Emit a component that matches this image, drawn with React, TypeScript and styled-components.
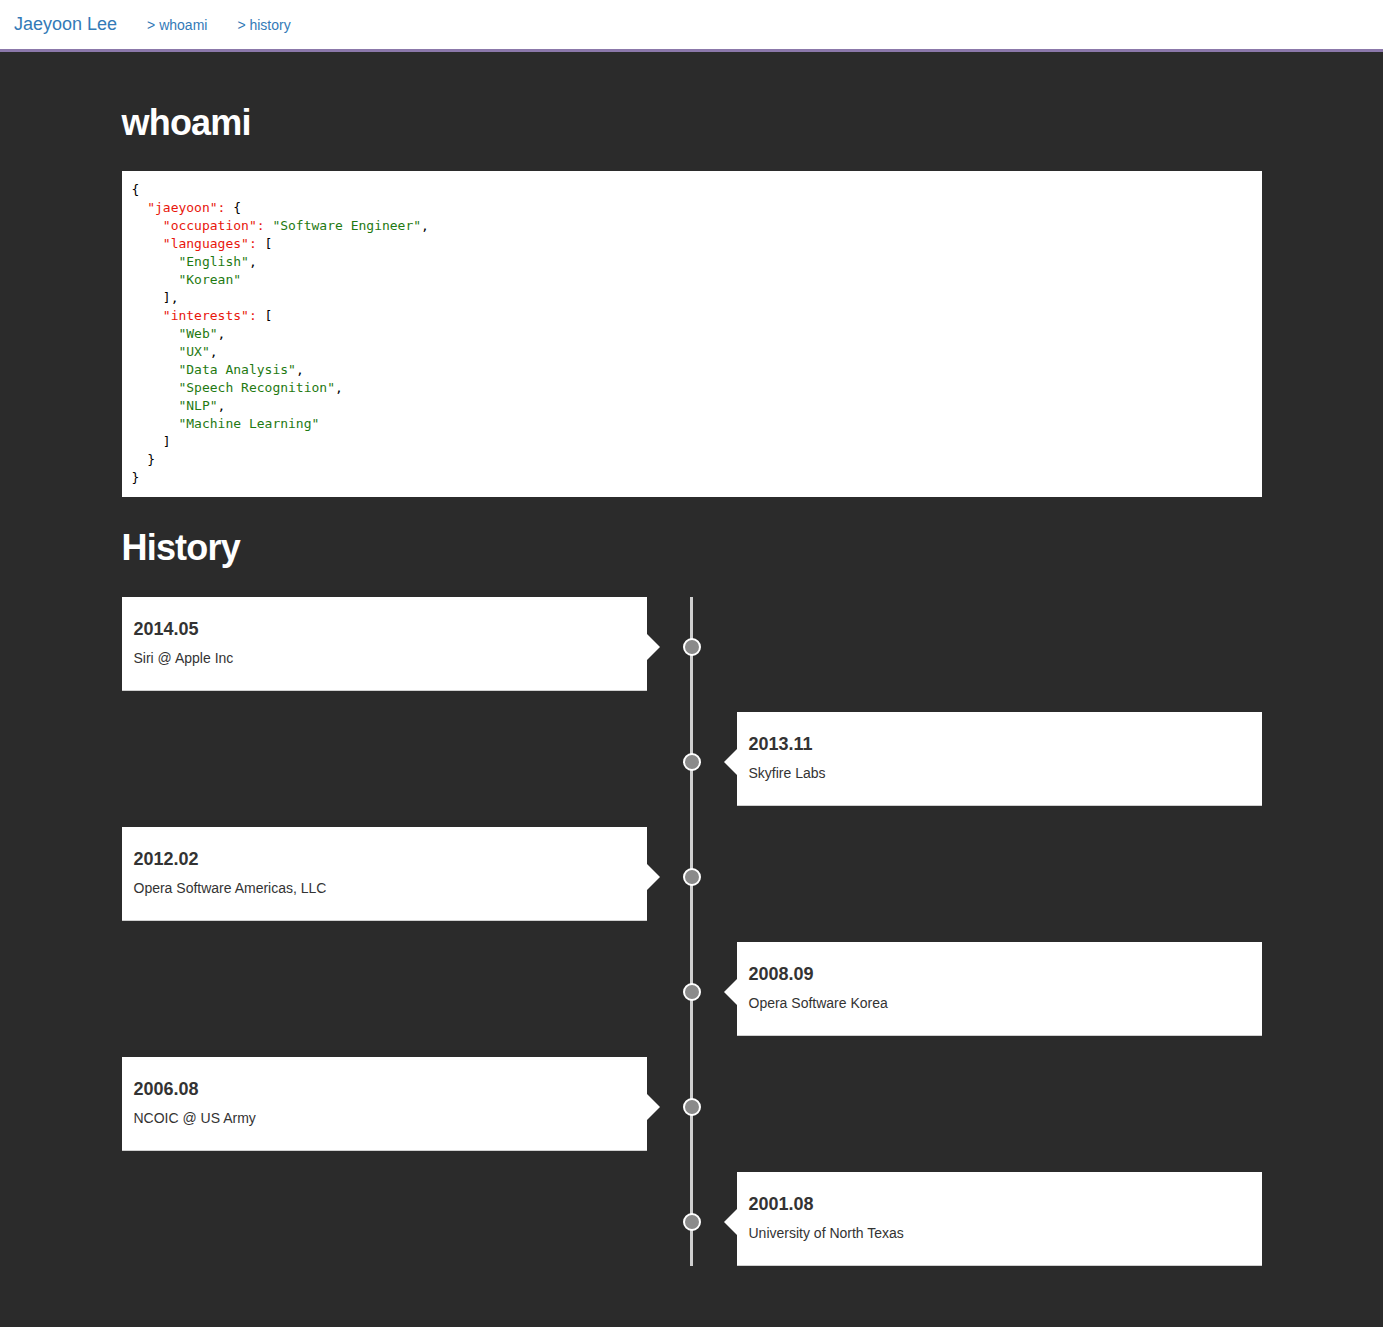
import React from "react";
import styled, { createGlobalStyle } from "styled-components";

const Global = createGlobalStyle`
  html, body {
    margin: 0;
    padding: 0;
    background: #2b2b2b;
  }
  body {
    font-family: "Liberation Sans", Arial, sans-serif;
    color: #333;
  }
  * { box-sizing: border-box; }
`;

const Header = styled.header`
  height: 52px;
  background: #fff;
  border-bottom: 3px solid #8b78aa;
  display: flex;
  align-items: center;
  gap: 30px;
  padding-left: 14px;
  padding-bottom: 1px;
`;

const Brand = styled.a`
  font-size: 18px;
  color: #337ab7;
  text-decoration: none;
`;

const NavLink = styled.a`
  font-size: 14px;
  color: #337ab7;
  text-decoration: none;
  padding-top: 2px;
`;

const Main = styled.main`
  width: 1140px;
  margin: 0 auto;
  padding: 51px 0 61px;
`;

const Heading = styled.h1`
  margin: 0 0 28px;
  font-size: 36px;
  line-height: 1.1;
  font-weight: bold;
  letter-spacing: -0.8px;
  color: #fff;
`;

const HistoryHeading = styled(Heading)`
  margin-top: 31px;
  margin-bottom: 30px;
`;

const Code = styled.pre`
  margin: 0;
  padding: 10px;
  background: #fff;
  color: #000;
  font-family: "DejaVu Sans Mono", monospace;
  font-size: 13px;
  line-height: 18px;
  white-space: pre;
`;

const Key = styled.span`
  color: #e8160c;
`;

const Str = styled.span`
  color: #1f7a12;
`;

const Timeline = styled.div`
  position: relative;
  display: flex;
  flex-direction: column;
  gap: 21px;
  &::before {
    content: "";
    position: absolute;
    top: 0;
    bottom: 0;
    left: 50%;
    width: 3px;
    margin-left: -1.5px;
    background: #cfcfcf;
  }
`;

const Item = styled.div<{ $side: "left" | "right" }>`
  position: relative;
  display: flex;
  justify-content: ${(p) => (p.$side === "left" ? "flex-start" : "flex-end")};
`;

const Dot = styled.span`
  position: absolute;
  left: 50%;
  top: 41px;
  width: 18px;
  height: 18px;
  margin-left: -9px;
  border-radius: 50%;
  background: #8a8a8a;
  border: 2px solid #fff;
  z-index: 1;
`;

const Card = styled.div<{ $side: "left" | "right" }>`
  position: relative;
  width: 525px;
  height: 94px;
  background: #fff;
  padding: 12px;
  border-bottom: 1px solid #d0d0d0;
  &::after {
    content: "";
    position: absolute;
    top: 37px;
    width: 0;
    height: 0;
    border-top: 13px solid transparent;
    border-bottom: 13px solid transparent;
    ${(p) =>
      p.$side === "left"
        ? "right: -13px; border-left: 13px solid #fff;"
        : "left: -13px; border-right: 13px solid #fff;"}
  }
`;

const Date = styled.h4`
  margin: 11px 0 8px;
  font-size: 18px;
  line-height: 1.1;
  font-weight: bold;
  color: #333;
`;

const Place = styled.p`
  margin: 0;
  font-size: 14px;
  line-height: 20px;
  color: #333;
`;

const history = [
  { date: "2014.05", place: "Siri @ Apple Inc" },
  { date: "2013.11", place: "Skyfire Labs" },
  { date: "2012.02", place: "Opera Software Americas, LLC" },
  { date: "2008.09", place: "Opera Software Korea" },
  { date: "2006.08", place: "NCOIC @ US Army" },
  { date: "2001.08", place: "University of North Texas" },
];

const interests = ["Web", "UX", "Data Analysis", "Speech Recognition", "NLP", "Machine Learning"];

export default function App() {
  return (
    <>
      <Global />
      <Header>
        <Brand href="#">Jaeyoon Lee</Brand>
        <NavLink href="#whoami">&gt; whoami</NavLink>
        <NavLink href="#history">&gt; history</NavLink>
      </Header>
      <Main>
        <Heading id="whoami">whoami</Heading>
        <Code>
          {"{\n  "}
          <Key>"jaeyoon":</Key>
          {" {\n    "}
          <Key>"occupation":</Key> <Str>"Software Engineer"</Str>
          {",\n    "}
          <Key>"languages":</Key>
          {" [\n      "}
          <Str>"English"</Str>
          {",\n      "}
          <Str>"Korean"</Str>
          {"\n    ],\n    "}
          <Key>"interests":</Key>
          {" [\n"}
          {interests.map((it, i) => (
            <React.Fragment key={it}>
              {"      "}
              <Str>"{it}"</Str>
              {i < interests.length - 1 ? ",\n" : "\n"}
            </React.Fragment>
          ))}
          {"    ]\n  }\n}"}
        </Code>
        <HistoryHeading id="history">History</HistoryHeading>
        <Timeline>
          {history.map((h, i) => {
            const side = i % 2 === 0 ? "left" : "right";
            return (
              <Item key={h.date} $side={side}>
                <Card $side={side}>
                  <Date>{h.date}</Date>
                  <Place>{h.place}</Place>
                </Card>
                <Dot />
              </Item>
            );
          })}
        </Timeline>
      </Main>
    </>
  );
}
